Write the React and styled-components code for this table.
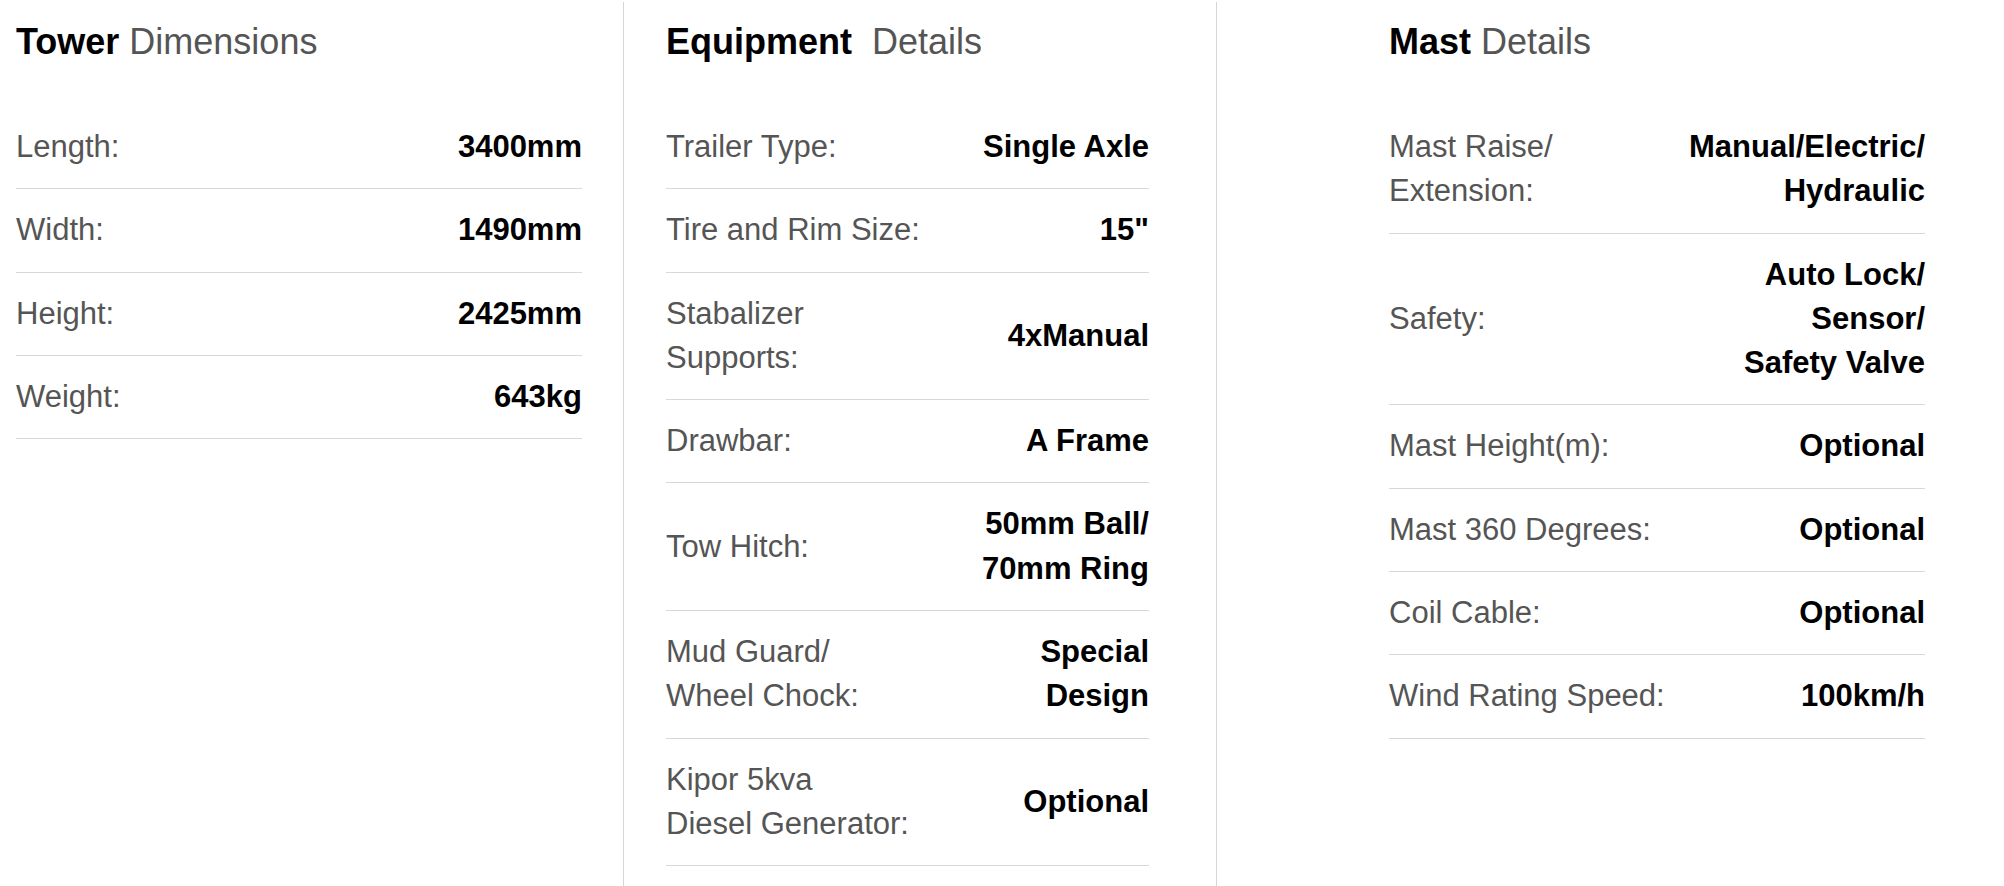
import React from "react";
import styled, { createGlobalStyle } from "styled-components";

const Global = createGlobalStyle`
  html, body { margin: 0; padding: 0; background: #fff; }
  body { font-family: "Liberation Sans", Arial, sans-serif; }
`;

const Page = styled.div`
  display: grid;
  grid-template-columns: 623px 593px 1fr;
  height: 884px;
  margin-top: 2px;
`;

const Column = styled.section`
  padding-left: ${(p) => p.$padLeft}px;
  border-left: ${(p) => (p.$divider ? "1px solid #d6d6d6" : "none")};
`;

const Inner = styled.div`
  width: ${(p) => p.$width}px;
`;

const Title = styled.h2`
  margin: 18px 0 43px;
  font-size: 36px;
  line-height: 43px;
  font-weight: normal;
  color: #555;
  white-space: pre;
  b {
    color: #000;
    font-weight: bold;
  }
`;

const Row = styled.div`
  display: flex;
  justify-content: space-between;
  align-items: center;
  padding: 19px 0;
  border-bottom: 1px solid #d8d8d8;
  font-size: 31px;
  line-height: 44.3px;
`;

const Label = styled.span`
  color: #555;
`;

const Value = styled.span`
  color: #000;
  font-weight: bold;
  text-align: right;
`;

const Lines = ({ text }) =>
  text.split("\n").map((t, i, arr) => (
    <React.Fragment key={i}>
      {t}
      {i < arr.length - 1 && <br />}
    </React.Fragment>
  ));

const columns = [
  {
    bold: "Tower",
    rest: " Dimensions",
    padLeft: 16,
    width: 566,
    divider: false,
    rows: [
      ["Length:", "3400mm"],
      ["Width:", "1490mm"],
      ["Height:", "2425mm"],
      ["Weight:", "643kg"],
    ],
  },
  {
    bold: "Equipment",
    rest: "\u00a0 Details",
    padLeft: 42,
    width: 483,
    divider: true,
    rows: [
      ["Trailer Type:", "Single Axle"],
      ["Tire and Rim Size:", '15"'],
      ["Stabalizer\nSupports:", "4xManual"],
      ["Drawbar:", "A Frame"],
      ["Tow Hitch:", "50mm Ball/\n70mm Ring"],
      ["Mud Guard/\nWheel Chock:", "Special\nDesign"],
      ["Kipor 5kva\nDiesel Generator:", "Optional"],
    ],
  },
  {
    bold: "Mast",
    rest: " Details",
    padLeft: 172,
    width: 536,
    divider: true,
    rows: [
      ["Mast Raise/\nExtension:", "Manual/Electric/\nHydraulic"],
      ["Safety:", "Auto Lock/\nSensor/\nSafety Valve"],
      ["Mast Height(m):", "Optional"],
      ["Mast 360 Degrees:", "Optional"],
      ["Coil Cable:", "Optional"],
      ["Wind Rating Speed:", "100km/h"],
    ],
  },
];

export default function App() {
  return (
    <>
      <Global />
      <Page>
        {columns.map((c) => (
          <Column key={c.bold} $padLeft={c.padLeft} $divider={c.divider}>
            <Inner $width={c.width}>
              <Title>
                <b>{c.bold}</b>
                {c.rest}
              </Title>
              {c.rows.map(([l, v]) => (
                <Row key={l}>
                  <Label>
                    <Lines text={l} />
                  </Label>
                  <Value>
                    <Lines text={v} />
                  </Value>
                </Row>
              ))}
            </Inner>
          </Column>
        ))}
      </Page>
    </>
  );
}
